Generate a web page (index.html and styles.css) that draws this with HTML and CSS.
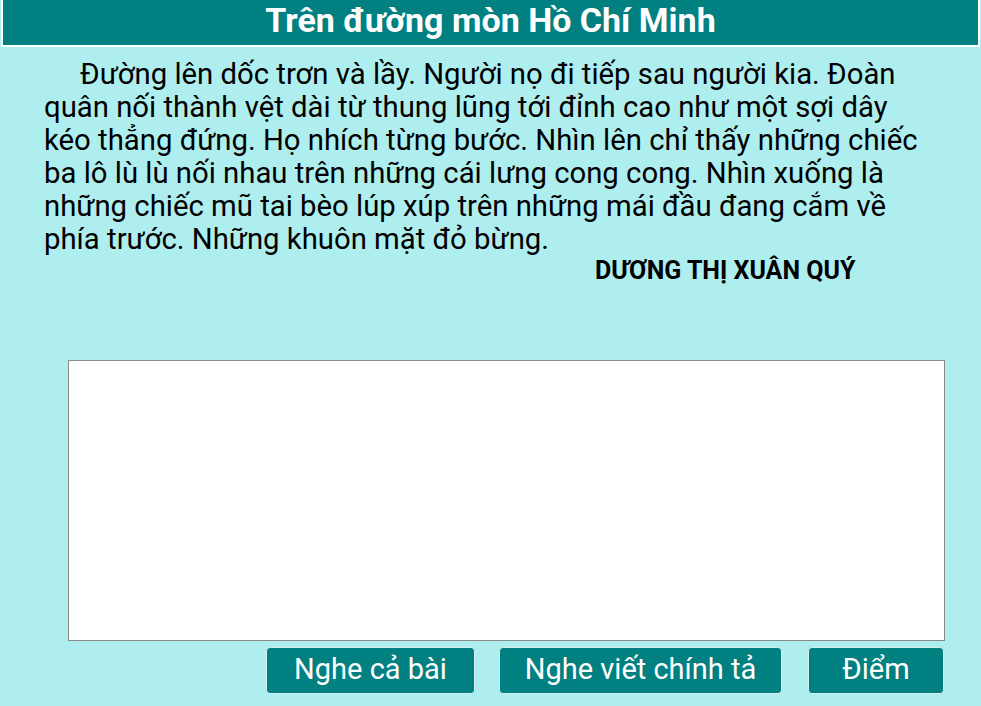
FILE: index.html
```html
<!DOCTYPE html>
<html lang="vi">
<head>
    <meta charset="UTF-8">
    <meta name="viewport" content="width=device-width, initial-scale=1.0">
    <title>Trên đường mòn Hồ Chí Minh - Chính tả</title>
    <link rel="stylesheet" href="styles.css">
</head>
<body>
    <header class="title-bar">
        <h1>Trên đường mòn Hồ Chí Minh</h1>
    </header>

    <section class="lesson">
        <p class="passage">Đường lên dốc trơn và lầy. Người nọ đi tiếp sau người kia. Đoàn quân nối thành vệt dài từ thung lũng tới đỉnh cao như một sợi dây kéo thẳng đứng. Họ nhích từng bước. Nhìn lên chỉ thấy những chiếc ba lô lù lù nối nhau trên những cái lưng cong cong. Nhìn xuống là những chiếc mũ tai bèo lúp xúp trên những mái đầu đang cắm về phía trước. Những khuôn mặt đỏ bừng.</p>
        <div class="author">DƯƠNG THỊ XUÂN QUÝ</div>

        <textarea class="answer" id="answer"></textarea>

        <div class="actions">
            <button class="btn btn-all">Nghe cả bài</button>
            <button class="btn btn-dictate">Nghe viết chính tả</button>
            <button class="btn btn-score">Điểm</button>
        </div>
    </section>
</body>
</html>
```

FILE: styles.css
```css
body {
    margin: 0;
    padding: 0;
    background-color: #afeeee;
    font-family: Roboto, "Liberation Sans", sans-serif;
    color: #000;
}

.title-bar {
    margin: 0 1px;
    height: 45px;
    background-color: #008080;
    border: 2px solid #fff;
    border-top: none;
    display: flex;
    align-items: center;
    justify-content: center;
}

.title-bar h1 {
    margin: -6px 0 0;
    font-size: 34px;
    font-weight: bold;
    color: #fff;
}

.lesson {
    padding: 0 0 0 44px;
}

.passage {
    margin: 11px 0 0;
    width: 890px;
    font-size: 29.3px;
    line-height: 33px;
    text-indent: 36px;
}

.author {
    margin: 0 0 0 551px;
    font-size: 25px;
    font-weight: bold;
    line-height: 30px;
}

.answer {
    display: block;
    box-sizing: border-box;
    margin: 74px 0 0 24px;
    width: 877px;
    height: 281px;
    border: 1px solid #8a8a8a;
    background: #fff;
    resize: none;
    font-family: Roboto, "Liberation Sans", sans-serif;
    font-size: 22px;
}

.actions {
    display: flex;
    justify-content: flex-end;
    gap: 24px;
    width: 900px;
    margin-top: 6px;
}

.btn {
    box-sizing: border-box;
    height: 47px;
    padding: 0 0 3px;
    font-family: Roboto, "Liberation Sans", sans-serif;
    font-size: 29px;
    color: #fff;
    background-color: #008080;
    border: 1px solid #d6eeee;
    border-radius: 4px;
    cursor: pointer;
}

.btn:hover {
    background-color: #006f6f;
}

.btn-all {
    width: 209px;
}

.btn-dictate {
    width: 283px;
}

.btn-score {
    width: 136px;
    margin-left: 2px;
}
```
